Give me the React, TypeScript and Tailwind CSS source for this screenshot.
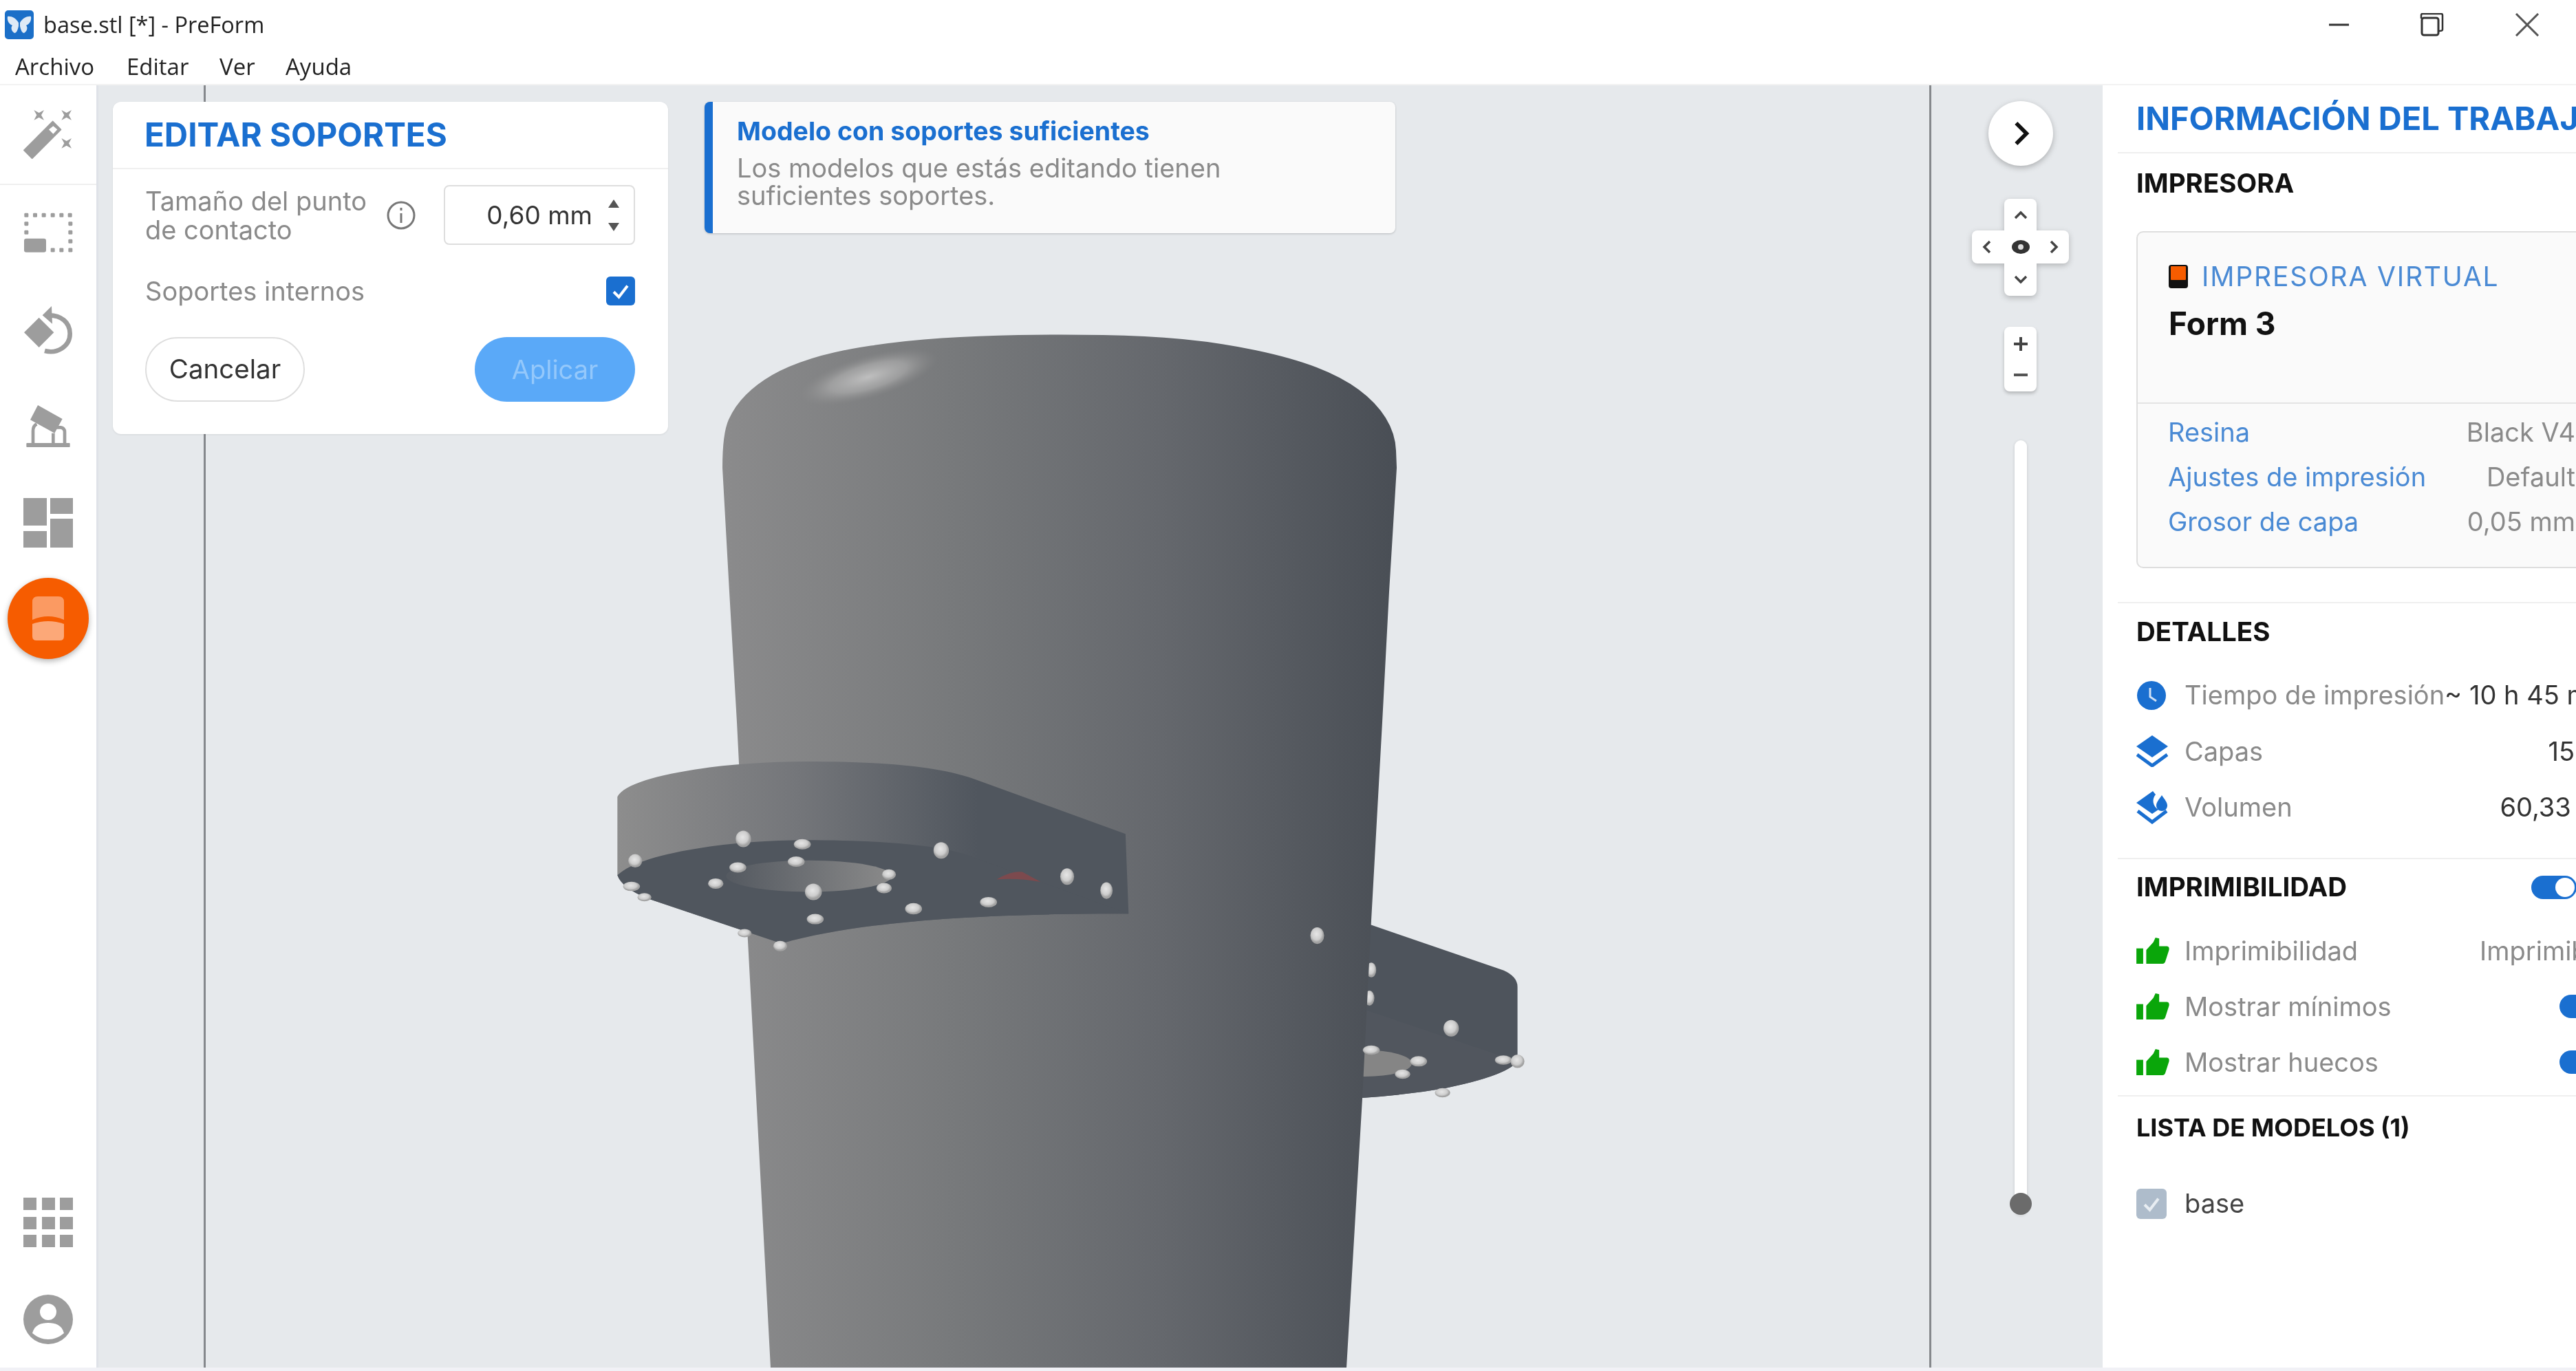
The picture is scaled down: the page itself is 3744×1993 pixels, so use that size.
import React from 'react'

// puntos de soporte sobre las bridas (coordenadas del visor, ver transform del grupo)
const dots = [
  [258, 282, 10, 16], [82, 335, 9, 13], [354, 295, 11, 10], [580, 310, 10, 16], [344, 337, 11, 10],
  [249, 351, 11, 10], [213, 390, 10, 10], [495, 368, 9, 10], [372, 410, 11, 16], [487, 401, 10, 10],
  [76, 397, 11, 9], [97, 423, 9, 8], [375, 476, 11, 10], [535, 451, 11, 11], [657, 435, 11, 10],
  [785, 373, 9, 16], [849, 407, 8, 16], [260, 510, 9, 8], [318, 541, 9, 10], [1192, 516, 9, 16],
  [1410, 740, 10, 16], [1280, 793, 11, 9], [1357, 820, 11, 10], [1331, 851, 10, 9], [1495, 817, 11, 9],
  [1518, 820, 9, 13], [1396, 896, 10, 9],
]

// contorno de la cúpula
const domePts = [
  [1050, 680], [1050, 630], [1068, 590], [1100, 558], [1145, 532], [1215, 510], [1316, 495], [1421, 488], [1540, 486],
  [1666, 488], [1772, 498], [1877, 520], [1950, 548], [2000, 585], [2028, 630], [2030, 680],
]

const domePath = () => {
  let d = `M${domePts[0][0]} ${domePts[0][1]}`
  for (let i = 1; i < domePts.length - 1; i++) {
    const [x, y] = domePts[i]
    const [nx, ny] = domePts[i + 1]
    d += ` Q${x} ${y} ${(x + nx) / 2} ${(y + ny) / 2}`
  }
  return `${d} L2030 680`
}

const Model = () => (
  <svg className="absolute inset-0 w-full h-full" viewBox="143 124 2913 1864">
    <defs>
      <linearGradient id="body" gradientUnits="userSpaceOnUse" x1="1049" y1="0" x2="2030" y2="0">
        <stop offset="0" stopColor="#8b8b8c" />
        <stop offset="0.35" stopColor="#77797b" />
        <stop offset="0.65" stopColor="#65686d" />
        <stop offset="1" stopColor="#494e55" />
      </linearGradient>
      <linearGradient id="wall" gradientUnits="userSpaceOnUse" x1="53" y1="0" x2="640" y2="0">
        <stop offset="0" stopColor="#8d8d8d" />
        <stop offset="0.5" stopColor="#74767a" />
        <stop offset="1" stopColor="#50565e" />
      </linearGradient>
      <linearGradient id="hole" gradientUnits="userSpaceOnUse" x1="235" y1="0" x2="500" y2="0">
        <stop offset="0" stopColor="#555a61" />
        <stop offset="1" stopColor="#8a8a8a" />
      </linearGradient>
      <radialGradient id="shine">
        <stop offset="0" stopColor="#c6c6c6" stopOpacity="0.9" />
        <stop offset="0.55" stopColor="#b2b2b2" stopOpacity="0.6" />
        <stop offset="1" stopColor="#909090" stopOpacity="0" />
      </radialGradient>
      <radialGradient id="dot" cx="0.45" cy="0.4">
        <stop offset="0" stopColor="#e6e6e6" />
        <stop offset="0.7" stopColor="#cdcdcd" />
        <stop offset="1" stopColor="#a2a2a2" />
      </radialGradient>
    </defs>
    <rect x="296" y="124" width="3" height="1864" fill="#85888c" />
    <rect x="2804" y="124" width="3" height="1864" fill="#85888c" />
    <g transform="translate(850 1050) scale(.893 .601)">
      {/* brida derecha, queda detrás del cuerpo */}
      <path d="M1270 485 L1495 600 Q1518 615 1518 640 L1518 820 Q1500 855 1400 885 Q1330 903 1250 910 Z" fill="#4e545c" />
      <path d="M1260 690 L1518 820 Q1500 855 1400 885 Q1330 903 1250 910 Z" fill="#51565e" />
      <ellipse cx="1270" cy="825" rx="76" ry="32" fill="#858585" />
      <ellipse cx="1280" cy="599" rx="8" ry="18" fill="url(#dot)" />
      <ellipse cx="1277" cy="667" rx="8" ry="18" fill="url(#dot)" />
    </g>
    <path
      d={`${domePath()} L2019 860 L2009 1050 L1993 1338 L1980 1597 L1957 1988 L1120 1988 L1087 1368 L1071 1050 L1060 860 Z`}
      fill="url(#body)"
    />
    <ellipse cx="1262" cy="548" rx="104" ry="31" transform="rotate(-16 1262 548)" fill="url(#shine)" />
    <g transform="translate(850 1050) scale(.893 .601)">
      {/* brida izquierda */}
      <path d="M53 180 C70 130 220 95 360 95 C480 95 570 105 630 135 L880 270 L885 463 C650 462 450 480 320 535 L260 505 L100 425 Q60 400 53 370 Z" fill="url(#wall)" />
      <path d="M53 370 C90 315 240 285 360 285 C470 285 570 295 620 320 L885 463 C650 462 450 480 320 535 L260 505 L100 425 Q60 400 53 370 Z" fill="#50565e" />
      <ellipse cx="365" cy="372" rx="135" ry="38" fill="url(#hole)" />
      <path d="M670 380 Q695 358 712 362 L742 386 Q705 376 670 380 Z" fill="#7c4a4e" />
      {dots.map(([x, y, rx, ry], i) => (
        <ellipse key={i} cx={x} cy={y} rx={rx * 1.25} ry={ry * 1.25} fill="url(#dot)" />
      ))}
    </g>
  </svg>
)

const Wand = () => (
  <svg className="w-[100px] h-[90px]" viewBox="0 0 300 270" fill="#9d9d9d">
    <path d="M45 205 L170 80 L205 115 L80 240 Z" stroke="#9d9d9d" strokeWidth="6" strokeLinejoin="round" />
    <path d="M153 115 L172 100 L190 115 L172 134 Z" fill="#fff" />
    <path d="M88 30 L110 42 L132 30 L120 52 L132 74 L110 62 L88 74 L100 52 Z" />
    <path d="M208 30 L230 42 L252 30 L240 52 L252 74 L230 62 L208 74 L220 52 Z" />
    <path d="M208 153 L230 165 L252 153 L240 175 L252 197 L230 185 L208 197 L220 175 Z" />
  </svg>
)

const SelectIcon = () => (
  <svg className="w-[100px] h-[77px]" viewBox="0 450 300 230" fill="#9d9d9d">
    {[[55, 488], [93, 488], [131, 488], [170, 488], [208, 488], [245, 488], [55, 525], [55, 563], [247, 525], [247, 563], [247, 602], [247, 640], [170, 640], [208, 640]].map(([x, y], i) => (
      <rect key={i} x={x - 9} y={y - 9} width="18" height="18" rx="4" />
    ))}
    <rect x="45" y="590" width="96" height="60" rx="10" />
  </svg>
)

const RotateIcon = () => (
  <svg className="w-[100px] h-[80px]" viewBox="0 870 300 240" fill="#9d9d9d">
    <path d="M45 1000 L110 935 L175 1000 L110 1065 Z" />
    <path d="M135 1080 C190 1095 245 1060 245 1005 C245 955 205 925 155 925" fill="none" stroke="#9d9d9d" strokeWidth="20" />
    <path d="M165 885 L125 925 L168 962 Z" />
  </svg>
)

const OrientIcon = () => (
  <svg className="w-[100px] h-[70px]" viewBox="0 1300 300 210" fill="#9d9d9d">
    <path d="M105 1318 L212 1378 L178 1440 L72 1382 Z" />
    <rect x="55" y="1483" width="190" height="18" rx="3" />
    <path d="M84 1490 L84 1430 Q84 1408 100 1400 M172 1490 L172 1440 M178 1415 L205 1415 Q222 1418 222 1435 L222 1490" fill="none" stroke="#9d9d9d" strokeWidth="14" />
  </svg>
)

const LayoutIcon = () => (
  <svg className="w-[72px] h-[72px]" viewBox="0 0 72 72" fill="#9d9d9d">
    <rect x="0" y="0" width="34" height="40" />
    <rect x="0" y="48" width="34" height="24" />
    <rect x="39" y="0" width="33" height="23" />
    <rect x="39" y="30" width="33" height="42" />
  </svg>
)

const GridIcon = () => (
  <svg className="w-[72px] h-[72px]" viewBox="0 0 72 72" fill="#9d9d9d">
    {[0, 27, 53].map((x) =>
      [0, 28, 54].map((y) => <rect key={`${x}-${y}`} x={x} y={y} width="19" height="18" />),
    )}
  </svg>
)

const PersonIcon = () => (
  <svg className="w-[72px] h-[72px]" viewBox="0 0 72 72">
    <circle cx="36" cy="36" r="36" fill="#9d9d9d" />
    <circle cx="36" cy="25" r="12" fill="#fff" />
    <path d="M13 56 C16 44 26 41 36 41 C46 41 56 44 59 56 C52 62 44 65 36 65 C28 65 20 62 13 56 Z" fill="#fff" />
  </svg>
)

const SupportIcon = () => (
  <svg className="w-[46px] h-[64px]" viewBox="0 0 46 64">
    <path d="M8 0 L38 0 Q46 0 46 8 L46 34 Q23 24 0 34 L0 8 Q0 0 8 0 Z" fill="#fb9a62" />
    <path d="M0 40 Q23 32 46 40 L46 58 Q46 64 40 64 L6 64 Q0 64 0 58 Z" fill="#fca878" />
  </svg>
)

const Butterfly = () => (
  <span className="w-[42px] h-[42px] rounded-[5px] bg-[#1b6fc8] flex items-center justify-center">
    <svg className="w-[36px] h-[30px]" viewBox="0 0 36 30" fill="#dfeaf6">
      <path d="M17 12 C13 5 6 2 1 3 C0 9 3 14 8 16 C5 19 7 25 11 27 C14 27 16 22 17 17 Z" />
      <path d="M19 12 C23 5 30 2 35 3 C36 9 33 14 28 16 C31 19 29 25 25 27 C22 27 20 22 19 17 Z" />
    </svg>
  </span>
)

const Clock = () => (
  <svg className="w-[44px] h-[44px]" viewBox="0 0 44 44">
    <circle cx="22" cy="22" r="21" fill="#1a6fd0" />
    <path d="M20 11 L20 24 L29 30" fill="none" stroke="#cfe0f5" strokeWidth="3" />
  </svg>
)

const Layers = () => (
  <svg className="w-[46px] h-[46px]" viewBox="0 0 46 46" fill="#1a6fd0">
    <path d="M23 0 L46 16 L23 32 L0 16 Z" />
    <path d="M1 28 L23 44 L45 28" fill="none" stroke="#1a6fd0" strokeWidth="5" />
  </svg>
)

const Volume = () => (
  <svg className="w-[46px] h-[48px]" viewBox="0 0 46 48" fill="#1a6fd0">
    <path d="M0 17 L24 0 L28 5 C22 12 24 22 32 27 L23 33 Z" />
    <path d="M37 6 C41 12 45 16 45 21 C45 26 41 29 37 29 C33 29 29 26 29 21 C29 16 33 12 37 6 Z" />
    <path d="M2 29 L23 45 L44 29" fill="none" stroke="#1a6fd0" strokeWidth="5" />
  </svg>
)

const Thumb = () => (
  <svg className="w-[48px] h-[38px]" viewBox="0 0 107 85" fill="#0aa60a">
    <rect x="0" y="35" width="22" height="50" />
    <path d="M32 40 L55 15 L62 0 L74 3 L74 28 L100 28 Q108 30 106 40 L94 78 Q92 85 85 85 L32 85 Z" />
  </svg>
)

const Toggle = ({ className }: { className: string }) => (
  <span className={`h-[34px] w-[66px] rounded-full bg-[#1a6fd0] flex items-center justify-end pr-[3px] shrink-0 ${className}`}>
    <span className="w-[28px] h-[28px] rounded-full bg-white" />
  </span>
)

const Check = ({ color }: { color: string }) => (
  <svg className="w-[30px] h-[30px]" viewBox="0 0 24 24" fill="none" stroke={color} strokeWidth="3.2">
    <path d="M4 13 L10 19 L20 6" />
  </svg>
)

const App = () => {
  const detalles = [
    { icon: <Clock />, label: 'Tiempo de impresión', value: '~ 10 h 45 min', right: 'mr-[10px]' },
    { icon: <Layers />, label: 'Capas', value: '15', right: 'mr-[58px]' },
    { icon: <Volume />, label: 'Volumen', value: '60,33 ml', right: 'mr-[10px]' },
  ]
  const printer = [
    { label: 'Resina', value: 'Black V4' },
    { label: 'Ajustes de impresión', value: 'Default' },
    { label: 'Grosor de capa', value: '0,05 mm' },
  ]

  return (
    <div className="w-[3744px] h-[1993px] flex flex-col overflow-hidden bg-white font-['Inter',sans-serif] blur-[0.7px]">
      {/* barra de ventana y menú */}
      <header className="h-[124px] shrink-0 border-b-2 border-[#f2f2f2] font-['Open_Sans',sans-serif] text-[#222] relative">
        <div className="h-[72px] flex items-center pl-[7px] gap-[14px]">
          <Butterfly />
          <span className="text-[32.5px]">base.stl [*] - PreForm</span>
          <span className="ml-auto flex items-center">
            <svg className="w-[310px] h-[34px]" viewBox="0 0 310 34" fill="none" stroke="#333" strokeWidth="3">
              <path d="M0 17 L29 17" />
              <path d="M134 8 L134 3 Q134 1 136 1 L163 1 Q165 1 165 3 L165 24 Q165 26 160 26" strokeWidth="2.5" />
              <rect x="135" y="7" width="24" height="25" rx="3" />
              <path d="M272 1 L304 33 M304 1 L272 33" stroke="#555" />
            </svg>
            <span className="w-[49px]" />
          </span>
        </div>
        <nav className="flex items-center text-[33px] pl-[22px] h-[50px]">
          <span className="w-[162px]">Archivo</span>
          <span className="w-[135px]">Editar</span>
          <span className="w-[96px]">Ver</span>
          <span>Ayuda</span>
        </nav>
      </header>

      <main className="flex-1 flex min-h-0">
        {/* herramientas */}
        <aside className="w-[143px] shrink-0 border-r-[3px] border-[#dfe2e8] flex flex-col items-center pt-[26px]">
          <Wand />
          <div className="w-full h-[2px] bg-[#efefef] mt-[27px]" />
          <div className="mt-[31px] flex"><SelectIcon /></div>
          <div className="mt-[63px] flex"><RotateIcon /></div>
          <div className="mt-[63px] flex"><OrientIcon /></div>
          <div className="mt-[71px] flex"><LayoutIcon /></div>
          <div className="mt-[44px] w-[118px] h-[118px] rounded-full bg-[#f65c00] shadow-[0_3px_8px_rgba(0,0,0,0.3)] flex items-center justify-center">
            <SupportIcon />
          </div>
          <div className="mt-auto flex"><GridIcon /></div>
          <div className="mt-[69px] mb-[34px] flex"><PersonIcon /></div>
        </aside>

        {/* visor 3D */}
        <section className="flex-1 relative bg-[#e6e9ec] overflow-hidden">
          <Model />

          <div className="absolute left-[21px] top-[24px] w-[807px] h-[483px] bg-white rounded-[12px] shadow-[0_1px_3px_rgba(0,0,0,0.08)]">
            <h2 className="h-[98px] pl-[46px] flex items-center text-[47.5px] font-bold text-[#1a6fd0] border-b-2 border-[#f0f0f0]">EDITAR SOPORTES</h2>
            <div className="pl-[47px] pr-[48px] pt-[23px]">
              <div className="flex items-center h-[87px]">
                <p className="text-[38px] leading-[42px] text-[#8a8a8a] w-[350px]">Tamaño del punto<br />de contacto</p>
                <svg className="w-[44px] h-[44px]" viewBox="0 0 44 44" fill="none" stroke="#777" strokeWidth="3">
                  <circle cx="22" cy="22" r="19" />
                  <path d="M22 19 L22 33 M22 11 L22 15" />
                </svg>
                <div className="ml-auto w-[278px] h-[87px] rounded-[8px] border-2 border-[#dedede] flex items-center justify-end pr-[20px] gap-[22px]">
                  <span className="text-[37px] text-[#333]">0,60 mm</span>
                  <span className="flex flex-col gap-[20px]">
                    <svg className="w-[18px] h-[14px]" viewBox="0 0 18 14" fill="#555"><path d="M9 1 L17 13 L1 13 Z" /></svg>
                    <svg className="w-[18px] h-[14px]" viewBox="0 0 18 14" fill="#555"><path d="M9 13 L17 1 L1 1 Z" /></svg>
                  </span>
                </div>
              </div>
              <div className="flex items-center justify-between h-[42px] mt-[46px]">
                <span className="text-[38px] text-[#8a8a8a]">Soportes internos</span>
                <span className="w-[42px] h-[42px] rounded-[6px] bg-[#1a6fd0] flex items-center justify-center"><Check color="#fff" /></span>
              </div>
              <div className="flex items-center justify-between mt-[46px]">
                <button className="w-[232px] h-[94px] rounded-full border-2 border-[#dedede] text-[38.5px] text-[#333]">Cancelar</button>
                <button className="w-[233px] h-[94px] rounded-full bg-[#5aa9f8] text-[38px] text-[#94c8fb]">Aplicar</button>
              </div>
            </div>
          </div>

          <div className="absolute left-[881px] top-[24px] w-[1004px] h-[191px] bg-[#fafafa] rounded-[8px] border-l-[12px] border-[#1a6fd0] shadow-[0_1px_3px_rgba(0,0,0,0.2)] pl-[35px] pt-[21px]">
            <p className="text-[37.5px] leading-[44px] font-bold text-[#1a6fd0]">Modelo con soportes suficientes</p>
            <p className="text-[38px] leading-[40px] text-[#8a8a8a] mt-[11px]">Los modelos que estás editando tienen<br />suficientes soportes.</p>
          </div>

          {/* controles de cámara */}
          <div className="absolute left-[2723px] top-[23px] w-[141px] flex flex-col items-center">
            <span className="w-[94px] h-[94px] rounded-full bg-white shadow-[0_3px_8px_rgba(0,0,0,0.25)] flex items-center justify-center">
              <svg className="w-[40px] h-[44px]" viewBox="0 0 24 24" fill="none" stroke="#111" strokeWidth="3.4"><path d="M8 3 L17 12 L8 21" /></svg>
            </span>
            <div className="mt-[48px] grid grid-cols-[47px_47px_47px] grid-rows-[46px_48px_47px] drop-shadow-[0_3px_4px_rgba(0,0,0,0.22)]">
              <span className="col-start-2 bg-white rounded-t-[8px] flex items-center justify-center">
                <svg className="w-[22px] h-[14px]" viewBox="0 0 22 14" fill="none" stroke="#444" strokeWidth="3.5"><path d="M3 12 L11 4 L19 12" /></svg>
              </span>
              <span className="col-span-3 row-start-2 bg-white rounded-[8px] flex items-center justify-between px-[14px]">
                <svg className="w-[14px] h-[22px]" viewBox="0 0 14 22" fill="none" stroke="#444" strokeWidth="3.5"><path d="M12 3 L4 11 L12 19" /></svg>
                <svg className="w-[28px] h-[22px]" viewBox="0 0 28 22"><ellipse cx="14" cy="11" rx="13" ry="10" fill="#333" /><circle cx="14" cy="11" r="4" fill="#ddd" /></svg>
                <svg className="w-[14px] h-[22px]" viewBox="0 0 14 22" fill="none" stroke="#444" strokeWidth="3.5"><path d="M2 3 L10 11 L2 19" /></svg>
              </span>
              <span className="col-start-2 row-start-3 bg-white rounded-b-[8px] flex items-center justify-center">
                <svg className="w-[22px] h-[14px]" viewBox="0 0 22 14" fill="none" stroke="#444" strokeWidth="3.5"><path d="M3 2 L11 10 L19 2" /></svg>
              </span>
            </div>
            <div className="mt-[45px] w-[47px] h-[94px] bg-white rounded-[8px] shadow-[0_3px_5px_rgba(0,0,0,0.22)] flex flex-col items-center justify-between pt-[14px] pb-[22px]">
              <svg className="w-[22px] h-[22px]" viewBox="0 0 22 22" stroke="#444" strokeWidth="4"><path d="M1 11 L21 11 M11 1 L11 21" /></svg>
              <span className="w-[20px] h-[4px] bg-[#555]" />
            </div>
            <div className="mt-[71px] w-[18px] h-[1126px] bg-white rounded-full shadow-[0_1px_4px_rgba(0,0,0,0.15)] flex flex-col items-center justify-end">
              <span className="w-[32px] h-[32px] shrink-0 rounded-full bg-[#6b6b6b]" />
            </div>
          </div>
        </section>

        {/* información del trabajo */}
        <aside className="w-[688px] shrink-0 overflow-hidden whitespace-nowrap">
          <div className="w-[744px]">
            <h2 className="h-[97px] pl-[49px] flex items-center text-[47px] font-bold text-[#1a6fd0]">INFORMACIÓN DEL TRABAJO</h2>

            <section className="ml-[22px] pl-[27px] border-t-2 border-[#efefef] h-[654px]">
              <p className="text-[38.5px] font-bold text-[#111] h-[87px] flex items-center">IMPRESORA</p>
              <div className="mt-[26px] h-[490px] w-[800px] bg-[#fafafa] border-2 border-[#dedede] rounded-[10px]">
                <div className="h-[249px] pl-[45px] pt-[46px] border-b-2 border-[#e4e4e4]">
                  <div className="flex items-center gap-[20px] h-[36px]">
                    <svg className="w-[28px] h-[34px]" viewBox="0 0 28 34">
                      <rect width="28" height="34" rx="4" fill="#111" />
                      <rect x="3" y="2" width="22" height="20" rx="1" fill="#f65c00" />
                    </svg>
                    <span className="text-[39px] tracking-[1.8px] text-[#4a8ad4]">IMPRESORA VIRTUAL</span>
                  </div>
                  <p className="text-[46px] font-bold text-[#111] mt-[16px]">Form 3</p>
                </div>
                <div className="pl-[44px] pt-[9px]">
                  {printer.map((row) => (
                    <div key={row.label} className="w-[592px] h-[65px] flex items-center justify-between text-[38px]">
                      <span className="text-[#4a8ad4]">{row.label}</span>
                      <span className="text-[#8a8a8a]">{row.value}</span>
                    </div>
                  ))}
                </div>
              </div>
            </section>

            <section className="ml-[22px] pl-[27px] border-t-2 border-[#efefef] pb-[32px]">
              <p className="text-[38.5px] font-bold text-[#111] h-[84px] flex items-center">DETALLES</p>
              <div className="mt-[9px]">
                {detalles.map((row) => (
                  <div key={row.label} className="h-[81.5px] flex items-center text-[38px]">
                    <span className="w-[70px] shrink-0 flex">{row.icon}</span>
                    <span className="text-[#8a8a8a] shrink-0">{row.label}</span>
                    <span className={`ml-auto shrink-0 text-[#333] ${row.right}`}>{row.value}</span>
                  </div>
                ))}
              </div>
            </section>

            <section className="ml-[22px] pl-[27px] border-t-2 border-[#efefef] pb-[7px]">
              <div className="flex items-center h-[82px]">
                <p className="text-[38.5px] font-bold text-[#111]">IMPRIMIBILIDAD</p>
                <Toggle className="ml-auto mr-[55px]" />
              </div>
              <div className="mt-[11px]">
                <div className="h-[81px] flex items-center text-[38px]">
                  <span className="w-[70px] shrink-0 flex"><Thumb /></span>
                  <span className="text-[#8a8a8a]">Imprimibilidad</span>
                  <span className="ml-auto mr-[8px] text-[#8a8a8a]">Imprimible</span>
                </div>
                <div className="h-[81px] flex items-center text-[38px]">
                  <span className="w-[70px] shrink-0 flex"><Thumb /></span>
                  <span className="text-[#8a8a8a]">Mostrar mínimos</span>
                  <Toggle className="ml-auto mr-[14px]" />
                </div>
                <div className="h-[81px] flex items-center text-[38px]">
                  <span className="w-[70px] shrink-0 flex"><Thumb /></span>
                  <span className="text-[#8a8a8a]">Mostrar huecos</span>
                  <Toggle className="ml-auto mr-[14px]" />
                </div>
              </div>
            </section>

            <section className="ml-[22px] pl-[27px] border-t-2 border-[#efefef]">
              <p className="text-[36px] font-bold text-[#111] h-[90px] flex items-center">LISTA DE MODELOS (1)</p>
              <div className="mt-[44px] flex items-center h-[44px]">
                <span className="w-[44px] h-[44px] rounded-[6px] bg-[#aebccb] flex items-center justify-center mr-[26px]"><Check color="#e8edf2" /></span>
                <span className="text-[38px] text-[#444]">base</span>
              </div>
            </section>
          </div>
        </aside>
      </main>
      <div className="h-[5px] shrink-0 bg-[#f1f1f6]" />
    </div>
  )
}

export default App
